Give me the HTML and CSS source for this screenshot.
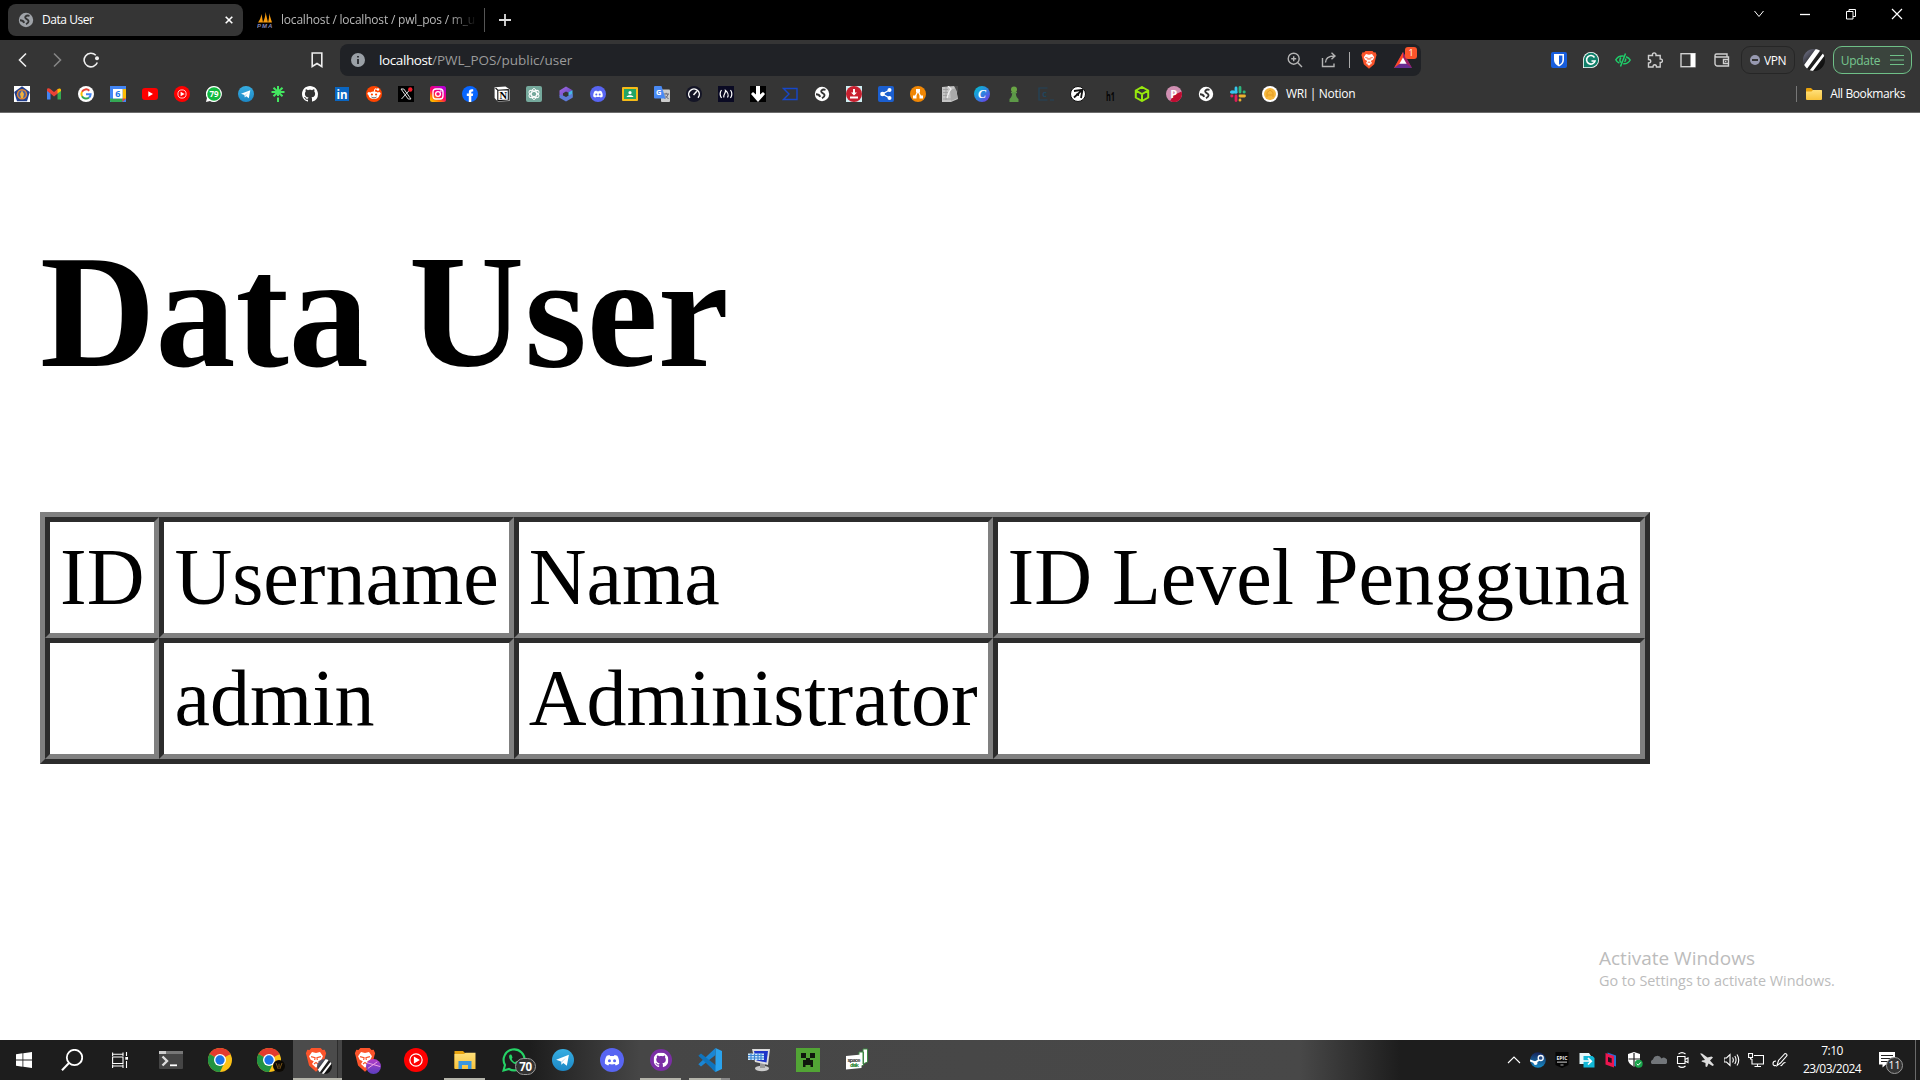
FILE: index.html
```html
<!DOCTYPE html>
<html lang="id">
<head>
<meta charset="utf-8">
<title>Data User</title>
<link rel="stylesheet" href="styles.css">
</head>
<body>
<svg class="defs" width="0" height="0" aria-hidden="true">
  <defs>
    <linearGradient id="g-tg" x1="0" y1="0" x2="0" y2="1"><stop offset="0" stop-color="#37aee2"/><stop offset="1" stop-color="#1c87c5"/></linearGradient>
    <linearGradient id="g-ig" x1="0" y1="1" x2=".7" y2="0"><stop offset="0" stop-color="#ffd500"/><stop offset=".3" stop-color="#ff7a00"/><stop offset=".55" stop-color="#ff0169"/><stop offset="1" stop-color="#b900d4"/></linearGradient>
    <linearGradient id="g-canva" x1="0" y1="0" x2="1" y2="1"><stop offset="0" stop-color="#00c4cc"/><stop offset=".5" stop-color="#2a87e0"/><stop offset="1" stop-color="#7d2ae8"/></linearGradient>
    <linearGradient id="g-cop" x1="0" y1="0" x2="1" y2="1"><stop offset="0" stop-color="#a36be0"/><stop offset="1" stop-color="#5c3fc4"/></linearGradient>
    <linearGradient id="g-folder" x1="0" y1="0" x2="0" y2="1"><stop offset="0" stop-color="#ffe07a"/><stop offset="1" stop-color="#f8c33b"/></linearGradient>
    <linearGradient id="g-ava" x1="0" y1="0" x2="1" y2="1"><stop offset="0" stop-color="#7d7f9a"/><stop offset=".5" stop-color="#222"/><stop offset="1" stop-color="#050505"/></linearGradient>
    <linearGradient id="g-steam" x1="0" y1="0" x2="0" y2="1"><stop offset="0" stop-color="#16235a"/><stop offset="1" stop-color="#1689c4"/></linearGradient>
    <linearGradient id="g-pur" x1="0" y1="0" x2="0" y2="1"><stop offset="0" stop-color="#b33cc8"/><stop offset="1" stop-color="#5a3fc0"/></linearGradient>
    <clipPath id="c-round"><circle cx="8" cy="8" r="8"/></clipPath>
  </defs>
  <symbol id="globe" viewBox="0 0 16 16"><circle cx="8" cy="8" r="7.200" fill="currentColor"/><path d="M11.500 3.800C8 2.800 5.800 5.500 8.300 6.800S12 9.800 8 12.300M2 8.300C4 8.300 5.500 9 6.200 10.800" fill="none" stroke="#353535" stroke-width="1.900"/></symbol>
  <symbol id="github" viewBox="0 0 16 16"><path fill="currentColor" d="M8 0C3.580 0 0 3.580 0 8c0 3.540 2.290 6.530 5.470 7.590.4.070.55-.17.55-.38 0-.19-.01-.82-.01-1.490-2.010.37-2.530-.49-2.690-.94-.09-.23-.48-.94-.82-1.130-.28-.15-.68-.52-.01-.53.63-.01 1.080.58 1.230.82.72 1.210 1.870.87 2.330.66.070-.52.28-.87.51-1.070-1.780-.2-3.640-.89-3.640-3.950 0-.87.31-1.590.82-2.150-.08-.2-.36-1.020.08-2.120 0 0 .67-.21 2.200.82.64-.18 1.320-.27 2-.27.68 0 1.360.09 2 .27 1.530-1.040 2.200-.82 2.200-.82.44 1.100.16 1.920.08 2.120.51.56.82 1.270.82 2.150 0 3.070-1.870 3.750-3.650 3.950.29.25.54.73.54 1.480 0 1.070-.01 1.930-.01 2.200 0 .21.15.46.55.38A8.010 8.010 0 0 0 16 8c0-4.420-3.580-8-8-8z"/></symbol>
  <symbol id="telegram" viewBox="0 0 16 16"><circle cx="8" cy="8" r="8" fill="url(#g-tg)"/><path d="M3 7.800 12.300 4.200 10.800 12.200 8.200 10.200 6.900 11.500 6.500 9.100z" fill="#fff"/><path d="M6.500 9.200 10.500 6 7.400 9.700 6.900 11.500z" fill="#b5d9ee"/></symbol>
  <symbol id="discord" viewBox="0 0 16 16"><circle cx="8" cy="8" r="8" fill="#5865f2"/><path d="M6.300 4.600 4.500 5.200C3.500 6.800 3.100 8.600 3.300 10.500c.8.600 1.500.9 2.200 1.100l.6-.9c1.200.3 2.600.3 3.800 0l.6.9c.8-.2 1.500-.6 2.200-1.100.2-2-.2-3.700-1.200-5.300l-1.800-.6-.4.700H6.700z" fill="#fff"/><circle cx="6.300" cy="8.500" r="1" fill="#5865f2"/><circle cx="9.700" cy="8.500" r="1" fill="#5865f2"/></symbol>
  <symbol id="ytmusic" viewBox="0 0 16 16"><circle cx="8" cy="8" r="8" fill="#f00"/><circle cx="8" cy="8" r="4.100" fill="none" stroke="#fff" stroke-width=".8"/><path d="M6.600 5.700 10.600 8 6.600 10.300z" fill="#fff"/></symbol>
  <symbol id="chrome" viewBox="0 0 16 16"><circle cx="8" cy="8" r="8" fill="#fbc116"/><path d="M8 8 1.070 4A8 8 0 0 1 14.930 4z" fill="#e33b2e"/><path d="M8 8 1.070 4A8 8 0 0 0 8 16L11 9.700z" fill="#229342"/><path d="M8 4h6.930l.2.400H8z" fill="#e33b2e"/><circle cx="8" cy="8" r="4" fill="#fff"/><circle cx="8" cy="8" r="3.100" fill="#1a73e8"/></symbol>
  <symbol id="brave" viewBox="0 0 16 18"><path d="M4.500 0h7l1.400 1.500L14.500 1.300 15.600 4 15 6 13.200 13.200 8 17.800 2.800 13.200 1 6 .4 4 1.500 1.300 3.100 1.500z" fill="#fb542b"/><path d="M5 3 8 3.700 11 3 13.200 6.200 12 8.800 9.700 10 11 12 8 14.800 5 12 6.300 10 4 8.800 2.800 6.200z" fill="#fff"/><path d="M4.300 6.500 7.300 7.300 7 9M11.700 6.500 8.700 7.300 9 9M6.500 12 8 10.800 9.500 12" fill="none" stroke="#fb542b" stroke-width=".9"/></symbol>
  <symbol id="avatar" viewBox="0 0 16 16"><g clip-path="url(#c-round)"><rect width="16" height="16" fill="url(#g-ava)"/><path d="M-1 14 10-1h4L1 17zM4.500 16 15 2.500l2 .5L6.500 17z" fill="#fff"/></g></symbol>
</svg>

<header class="browser">
  <div class="tabstrip">
    <div class="tab tab-active">
      <svg class="i16 tab-globe"><use href="#globe"/></svg>
      <span class="tab-title">Data User</span>
      <svg class="tab-close" viewBox="0 0 8 8"><path d="M.7.7 7.300 7.300M7.300.7.7 7.300"/></svg>
    </div>
    <div class="tab tab-idle">
      <svg class="i16" viewBox="0 0 16 16"><path d="M1 10.500C3 8 4 5 4.500 2L6 10.500zM6 10.500C7.500 7 8.500 4 8.500 0L11 10.500zM11 10.500C12 7 12.500 4 12 1L15 10.500z" fill="#f89c0e"/><text x="0" y="15.500" class="t-pma" textLength="15">PMA</text></svg>
      <span class="tab-title tab-fade">localhost / localhost / pwl_pos / m_u</span>
    </div>
    <span class="tab-sep"></span>
    <svg class="newtab" viewBox="0 0 12 12"><path d="M6 0V12M0 6H12"/></svg>
    <div class="winctl">
      <svg viewBox="0 0 12 12"><path d="M1.500 3 6 8.500 10.500 3"/></svg>
      <svg viewBox="0 0 12 12"><path d="M1 6.500H11" stroke-width="1.300"/></svg>
      <svg viewBox="0 0 12 12"><path d="M1.500 3.500h6.500v7.500H1.500zM4 3.500V1.500h6.500v7H8"/></svg>
      <svg viewBox="0 0 12 12"><path d="M1 1 11 11M11 1 1 11" stroke-width="1.200"/></svg>
    </div>
  </div>

  <div class="toolbar">
    <div class="nav">
      <svg viewBox="0 0 16 16"><path d="M11 1.500 4.500 8 11 14.500" class="ln"/></svg>
      <svg class="dim" viewBox="0 0 16 16"><path d="M5 1.500 11.500 8 5 14.500" class="ln"/></svg>
      <svg viewBox="0 0 16 16"><path d="M12.800 3.300A6.800 6.800 0 1 0 14.300 10.500" class="ln"/><circle cx="14" cy="6.200" r="2" fill="#eee"/></svg>
    </div>
    <svg class="bookmark" viewBox="0 0 12 16"><path d="M1.200 1h9.600v13.500L6 11.500 1.200 14.500z" class="ln"/></svg>
    <div class="omnibox">
      <svg class="info" viewBox="0 0 14 14"><circle cx="7" cy="7" r="7" fill="#9aa0a6"/><path d="M7 3V4.600M7 6V11" stroke="#202226" stroke-width="1.700"/></svg>
      <span class="url"><b>localhost</b>/PWL_POS/public/user</span>
      <div class="omni-icons">
        <svg class="i16" viewBox="0 0 16 16"><g class="ol"><circle cx="6.700" cy="6.700" r="5.500"/><path d="M10.800 10.800 15 15M6.700 4.200V9.200M4.200 6.700H9.200"/></g></svg>
        <svg class="i16" viewBox="0 0 16 16"><path class="ol" d="M1.500 6V14.500H13V11.500M4.500 10.500C4.500 6.500 7 4 13.500 4M10.500.8 14 4 10.500 7.300"/></svg>
        <span class="omni-sep"></span>
        <svg class="brave-i"><use href="#brave"/></svg>
        <div class="bat">
          <svg viewBox="0 0 18 16"><path d="M9 0 18 16H0z" fill="#662d91"/><path d="M9 0 0 16 6 11.500 9 6z" fill="#ff4724"/><path d="M9 0 18 16 12 11.500 9 6z" fill="#9e1f63"/><path d="M9 5.500 12.600 11.700H5.400z" fill="#fff"/></svg>
          <span class="bat-badge">1</span>
        </div>
      </div>
    </div>
    <div class="ext">
      <svg class="i16" viewBox="0 0 16 16"><rect width="16" height="16" rx="2" fill="#175ddc"/><path d="M3 2H13V8C13 11 11 13 8 14.500 5 13 3 11 3 8z" fill="#fff"/><path d="M8 3.500H11.400V8C11.400 10.300 10 11.800 8 12.800z" fill="#175ddc"/></svg>
      <svg class="i16" viewBox="0 0 16 16"><path d="M8 0A8 8 0 1 1 8 16H0V8A8 8 0 0 1 8 0z" fill="#fff"/><path d="M8 .8A7.200 7.200 0 1 1 8 15.200H.8V8A7.200 7.200 0 0 1 8 .8z" fill="#11806a"/><path d="M11.500 5.500A4.300 4.300 0 1 0 12 9H8.500" fill="none" stroke="#fff" stroke-width="1.600"/></svg>
      <svg class="i16" viewBox="0 0 16 16"><g fill="none" stroke="#1fcf6a" stroke-width="1.500"><path d="M10.500 1.500 5.500 14.500M8.500 4C4 3.500 1.800 6 .8 7.800c.7 1.500 2 2.600 3.600 3.400M11 4.700c2 .7 3.500 2 4.200 3.300-1.200 2.300-3.700 4-7 3.700M6 5.500C4 8 5 9.500 6 10.500M10.500 6.500C11 8 10.500 9 9.500 9.800"/></g></svg>
      <svg class="i16" viewBox="0 0 16 16"><path class="ol lt" d="M1.500 3.500H5.500C4.800 0 9.500 0 9 3.500H13.200V7C16.200 6.500 16.200 11 13.200 10.500V15H9.500C9.500 12 6 12 6 15H1.500V11C4.500 11 4.500 7.500 1.500 7.500z"/></svg>
      <svg class="i16" viewBox="0 0 16 16"><rect x="1" y="1.700" width="14" height="13" class="ol lt"/><path d="M10.500 1.500H15V15H10.500z" fill="#fff"/></svg>
      <svg class="i16" viewBox="0 0 16 16"><path class="ol lt" d="M13 4.500V2H2.500A1.500 1.500 0 0 0 2.500 5H14.500V14H3.500A2.500 2.500 0 0 1 1 11.500V3.500M14.500 7.500H9.500V11.500H14.500"/><circle cx="11.700" cy="9.500" r=".8" fill="#ccc"/></svg>
    </div>
    <div class="vpn"><i></i>VPN</div>
    <svg class="ava"><use href="#avatar"/></svg>
    <div class="update">Update<svg viewBox="0 0 14 12"><path d="M0 1.500H14M0 6H14M0 10.500H14"/></svg></div>
  </div>

  <div class="bookmarks">
    <svg viewBox="0 0 16 16"><rect width="16" height="16" fill="#fff"/><path d="M8 .2 15.800 6 13 15.300H3L.2 6z" fill="#23408e"/><circle cx="8" cy="8.300" r="5.200" fill="#e2862f"/><circle cx="8" cy="8.300" r="3.800" fill="#4b5fa0"/><path d="M8 4.500 10 8 9 12H7L6 8z" fill="#f0b23c"/></svg>
    <svg viewBox="0 0 16 16"><path d="M1 4V13.500H4.500V7z" fill="#4285f4"/><path d="M15 4V13.500H11.500V7z" fill="#34a853"/><path d="M1 3.500C1 2 3 2 4 2.800L8 6 12 2.800V7.300L8 10.400 4.500 7.600 1 5z" fill="#ea4335"/><path d="M11.500 3.200C13 2 15 2.200 15 4V5L11.500 7.600z" fill="#fbbc04"/></svg>
    <svg viewBox="0 0 16 16"><circle cx="8" cy="8" r="8" fill="#fff"/><g fill="none" stroke-width="2"><path d="M11.300 4.700A4.600 4.600 0 0 0 4 5.800" stroke="#ea4335"/><path d="M4 5.700A4.700 4.700 0 0 0 4 10.300" stroke="#fbbc05"/><path d="M4 10.200A4.600 4.600 0 0 0 11 11.500" stroke="#34a853"/><path d="M8 8.200H12.600C12.600 9.500 12 10.800 11 11.500" stroke="#4285f4"/></g></svg>
    <svg viewBox="0 0 16 16"><rect width="16" height="16" fill="#4285f4"/><path d="M12.500 3H16V13H12.500z" fill="#fbbc04"/><path d="M0 12.500H12.500V16H1.500Q0 16 0 14.500z" fill="#34a853"/><path d="M12.500 12.500H16L12.500 16z" fill="#ea4335"/><rect x="3" y="3" width="9.500" height="9.500" fill="#fff"/><text x="7.800" y="11" class="t b mid" font-size="9" fill="#1a73e8">6</text></svg>
    <svg viewBox="0 0 16 16"><rect y="2" width="16" height="12" rx="3" fill="#f00"/><path d="M6.300 5.300 11 8 6.300 10.700z" fill="#fff"/></svg>
    <svg><use href="#ytmusic"/></svg>
    <svg viewBox="0 0 16 16"><path d="M8 0A8 8 0 1 1 4 15L0 16 1 12A8 8 0 0 1 8 0z" fill="#fff"/><circle cx="8" cy="8" r="6.800" fill="#12b93f"/><text x="8" y="11" class="t b mid" font-size="8" fill="#fff">79</text></svg>
    <svg><use href="#telegram"/></svg>
    <svg viewBox="0 0 16 16"><path d="M8 0V10M8 11.500V16M1.500 6H14.500M3.500 1.700 12.500 10.300M12.500 1.700 3.500 10.300" stroke="#43e660" stroke-width="2"/></svg>
    <svg class="white"><use href="#github"/></svg>
    <svg viewBox="0 0 16 16"><rect x="1" y="1" width="14" height="14" fill="#0a66c2"/><text x="8" y="12.800" class="t b mid" font-size="11.500" fill="#fff">in</text></svg>
    <svg viewBox="0 0 16 16"><circle cx="8" cy="8" r="8" fill="#ff4500"/><path d="M8 6.500 9 2.800 12 3.500" fill="none" stroke="#fff"/><circle cx="12" cy="3.500" r="1.200" fill="#fff"/><circle cx="3" cy="7.500" r="1.500" fill="#fff"/><circle cx="13" cy="7.500" r="1.500" fill="#fff"/><ellipse cx="8" cy="9.200" rx="5.300" ry="3.800" fill="#fff"/><circle cx="5.900" cy="8.500" r="1.100" fill="#ff4500"/><circle cx="10.100" cy="8.500" r="1.100" fill="#ff4500"/><path d="M5.500 11C7 12.200 9 12.200 10.500 11" fill="none" stroke="#333" stroke-width=".8"/></svg>
    <svg viewBox="0 0 16 16"><rect width="16" height="16" fill="#000"/><path d="M3 3H5.800L13 13H10.200zM12.500 3 3.500 13" fill="none" stroke="#ddd"/><circle cx="12.300" cy="3.500" r="2.200" fill="#f4212e"/></svg>
    <svg viewBox="0 0 16 16"><rect width="16" height="16" rx="2.500" fill="url(#g-ig)"/><rect x="3" y="3" width="10" height="10" rx="3" fill="none" stroke="#fff" stroke-width="1.300"/><circle cx="8" cy="8" r="2.400" fill="none" stroke="#fff" stroke-width="1.300"/><circle cx="10.900" cy="5.100" r=".8" fill="#fff"/></svg>
    <svg viewBox="0 0 16 16"><circle cx="8" cy="8" r="8" fill="#0866ff"/><path d="M6.800 16V10H4.800V7.500H6.800V6.500C6.800 3.800 8.200 2.900 11.200 3.300V5.500C9.600 5.400 9.300 5.800 9.300 6.800V7.500H11.200L10.800 10H9.300V16z" fill="#fff"/></svg>
    <svg viewBox="0 0 16 16"><path d="M.6 1.200 11.500.5 15.500 3.200V15L3.800 15.600.6 12z" fill="#fff"/><path d="M3.800 4.200 14.300 3.600V14L3.800 14.600zM3.800 4.200 1.500 2" stroke="#111" stroke-width="1.100" fill="none"/><text x="9.200" y="12.800" class="serif b mid" font-size="10.500" fill="#000">N</text></svg>
    <svg viewBox="0 0 16 16"><rect width="16" height="16" rx="2" fill="#75a99c"/><g fill="none" stroke="#fff" stroke-width=".9"><ellipse cx="8" cy="8" rx="2.600" ry="5.500"/><ellipse cx="8" cy="8" rx="2.600" ry="5.500" transform="rotate(60 8 8)"/><ellipse cx="8" cy="8" rx="2.600" ry="5.500" transform="rotate(120 8 8)"/></g></svg>
    <svg viewBox="0 0 16 16"><path d="M8 .5 14.500 4.200 10 6.500 8 5.500 5 7.200V12L1.500 9.500V4.500z" fill="url(#g-cop)"/><path d="M14.500 4.200V11.500L10.500 9.500V6z" fill="#49b7e8"/><path d="M5 9.500 8 11 14.500 7.500V11.700L8 15.500 1.500 11.700V9z" fill="#5e7bd8"/></svg>
    <svg><use href="#discord"/></svg>
    <svg viewBox="0 0 16 16"><rect y="1" width="16" height="14" rx="1" fill="#f6bb18"/><rect x="2" y="3" width="12" height="10" fill="#23a566"/><circle cx="8" cy="6.700" r="1.600" fill="#fff"/><path d="M4.500 11C5 8.700 11 8.700 11.500 11z" fill="#fff"/></svg>
    <svg viewBox="0 0 16 16"><rect x="7" y="3.500" width="9" height="12.500" rx="1" fill="#ccc"/><path d="M9.500 8H15M12.200 6.800V8M14 8C13.500 11 11.500 12 10.500 12.500M11 9.500 14.500 13" stroke="#667" fill="none"/><path d="M0 1Q0 0 1 0H7.500L11.500 12.500H1Q0 12.500 0 11.500z" fill="#4a8af4"/><text x="4.800" y="9" class="t b mid" font-size="7.500" fill="#fff">G</text></svg>
    <svg viewBox="0 0 16 16"><circle cx="8" cy="8" r="8" fill="#141526"/><path d="M4 11.800A5.300 5.300 0 1 1 12 11.800M7.500 9 10.800 5.300" fill="none" stroke="#fff" stroke-width="1.500"/></svg>
    <svg viewBox="0 0 16 16"><rect width="16" height="16" fill="#0a0a23"/><path d="M3.500 4Q.8 8 3.500 12M12.500 4Q15.200 8 12.500 12M6 11.500C4.500 9 8 7.500 7.500 4.500 9.500 6 11 9 9.500 11.500" fill="none" stroke="#fff" stroke-width="1.200"/></svg>
    <svg viewBox="0 0 16 16"><rect width="16" height="16" fill="#000"/><path d="M6 0H10V8.500L13 6 15 8 8 16 1 8 3 6 6 8.500z" fill="#fff"/></svg>
    <svg viewBox="0 0 16 16"><path d="M1.500 2.500H15V13.500H1.500L7 8z" fill="none" stroke="#1747c9" stroke-width="1.400"/></svg>
    <svg class="white"><use href="#globe"/></svg>
    <svg viewBox="0 0 16 16"><rect width="16" height="16" fill="#cfeef2"/><circle cx="8" cy="8" r="8" fill="#c8202f"/><path d="M7 3H9V6.500H11L8 9.500 5 6.500H7zM4 10.500H12V12.500H4z" fill="#fff"/></svg>
    <svg viewBox="0 0 16 16"><rect width="16" height="16" rx="2" fill="#1b5fd0"/><path d="M11.500 4 4.500 8 11.500 12" fill="none" stroke="#fff" stroke-width="1.300"/><circle cx="11.500" cy="4" r="2" fill="#fff"/><circle cx="4.500" cy="8" r="2.300" fill="#fff"/><circle cx="11.500" cy="12" r="2" fill="#fff"/></svg>
    <svg viewBox="0 0 16 16"><circle cx="8" cy="8" r="8" fill="#f08705"/><path d="M8 5 5 11M8 5 11 11" stroke="#fff" stroke-width="1.300"/><path d="M6 3H10V6.500H6zM3 9.500H6.500V12.500H3zM9.500 9.500H13V12.500H9.500z" fill="#fff"/></svg>
    <svg viewBox="0 0 16 16"><path d="M0 1 6 .5 13 0 14 2 16 13 9 16H0z" fill="#c4c4c4"/><path d="M1 3.500H6M1 6.500H6M1 9.500H7M1 13H9M4 1V14" stroke="#999" stroke-width=".8"/><path d="M8 4 14 2 15.500 12 9 15z" fill="#a9a9a9"/><path d="M12 0H16V7z" fill="#4a4a4a"/><path d="M6 0 9 3 7 6 5 12" stroke="#eee" stroke-width="1.300" fill="none"/></svg>
    <svg viewBox="0 0 16 16"><circle cx="8" cy="8" r="8" fill="url(#g-canva)"/><text x="8" y="12" class="serif b mid" font-style="italic" font-size="12" fill="#fff">C</text></svg>
    <svg viewBox="0 0 16 16"><circle cx="8" cy="3.500" r="3" fill="#69a545"/><path d="M5 6H11V7.200H9.800C10 10 11 12 12.500 13V16H3.500V13C5 12 6 10 6.200 7.200H5z" fill="#5d9948"/></svg>
    <svg viewBox="0 0 16 16"><path d="M9.500 2H1V14H9.500M12 14H16" fill="none" stroke="#22455c" stroke-width="1.200"/><text x="6.500" y="11" class="t b mid" font-size="9" fill="#22455c">c</text></svg>
    <svg viewBox="0 0 16 16"><circle cx="8" cy="8" r="7.500" fill="#fff" stroke="#111"/><path d="M4 5 12.500 3.800 11 12M12 4.200 4 11.500M6 8.500 9 9" fill="none" stroke="#111" stroke-width="1.800"/></svg>
    <svg viewBox="0 0 16 16"><text x="4" y="14.500" class="t b" font-size="12.500" textLength="9" fill="#050505" lengthAdjust="spacingAndGlyphs">h1</text></svg>
    <svg viewBox="0 0 16 16"><path d="M8 1 14.200 4.500V11.500L8 15 1.800 11.500V4.500zM1.800 4.500 8 8 14.200 4.500M8 8V15" fill="none" stroke="#97e80d" stroke-width="2"/></svg>
    <svg viewBox="0 0 16 16"><circle cx="8" cy="8" r="8" fill="#d08fb2"/><path d="M15.500 5.500A8 8 0 0 1 4 15L8 9z" fill="#c00d32"/><text x="7.800" y="12" class="t b mid" font-size="11" fill="#fff">P</text></svg>
    <svg class="white"><use href="#globe"/></svg>
    <svg viewBox="0 0 16 16"><g stroke-width="2.800" stroke-linecap="round"><path d="M6 2V6M2 6H3" stroke="#36c5f0"/><path d="M1.500 6.200H6" stroke="#36c5f0"/><path d="M10 1.500V6M14.300 6H14" stroke="#2eb67d"/><path d="M10 10H14.500M10 14V14.200" stroke="#ecb22e"/><path d="M6 10V14.500M1.700 10H2" stroke="#e01e5a"/></g></svg>
    <svg viewBox="0 0 16 16"><circle cx="8" cy="8" r="8" fill="#fff"/><circle cx="8" cy="8" r="6" fill="#f6b73c"/><path d="M5 11V6.500L8 4 11 6.500V11M5.500 9H10.500" fill="none" stroke="#e39a20"/></svg>
    <span class="bm-label">WRI | Notion</span>
    <div class="allbm">
      <svg viewBox="0 0 16 16"><path d="M0 3Q0 2 1 2H5L7 4H15Q16 4 16 5V7H0z" fill="#e8a20c"/><path d="M0 5.500H5.500L7 4H15Q16 4 16 5V13Q16 14 15 14H1Q0 14 0 13z" fill="url(#g-folder)"/></svg>
      <span>All Bookmarks</span>
    </div>
  </div>
</header>

<main class="page">
  <h1>Data User</h1>
  <table class="users">
    <tr><td>ID</td><td>Username</td><td>Nama</td><td>ID Level Pengguna</td></tr>
    <tr><td></td><td>admin</td><td>Administrator</td><td></td></tr>
  </table>
  <div class="watermark"><p class="wm-big">Activate Windows</p><p class="wm-small">Go to Settings to activate Windows.</p></div>
</main>

<footer class="taskbar">
  <div class="sys">
    <svg class="i16" viewBox="0 0 16 16"><path d="M0 2.200 6.500 1.300V7.600H0zM7.300 1.200 16 0V7.600H7.300zM0 8.400H6.500V14.700L0 13.800zM7.300 8.400H16V16L7.300 14.800z" fill="#fff"/></svg>
    <svg class="i22" viewBox="0 0 22 22"><circle cx="13.500" cy="8.500" r="7.700" fill="none" stroke="#fff" stroke-width="1.800"/><path d="M8 14 1 21.300" stroke="#fff" stroke-width="2"/></svg>
    <svg class="i16" viewBox="0 0 16 16"><path d="M.6 4V.6M.6 2.300H11M11 4V.6M.6 12.500V16M.6 14H11M11 12.500V16M.6 5H11V11.500H.6zM14.500 0V4M14.500 9V16" fill="none" stroke="#fff" stroke-width="1.100"/><rect x="13.300" y="5" width="2.700" height="2.700" fill="#fff"/></svg>
  </div>
  <div class="apps">
    <div class="app"><svg class="i24" viewBox="0 0 24 24"><rect y="3" width="24" height="18" rx="1" fill="#454545"/><rect y="3" width="24" height="3" fill="#777"/><rect y="3" width="7" height="3" fill="#ccc"/><path d="M3.500 8.500 8 13 3.500 17.500" fill="none" stroke="#ddd" stroke-width="2.400"/><path d="M11 17.300H18" stroke="#fff" stroke-width="1.800"/></svg></div>
    <div class="app"><svg class="i24"><use href="#chrome"/></svg></div>
    <div class="app"><svg class="i24"><use href="#chrome"/></svg><svg class="mini" viewBox="0 0 16 16"><circle cx="8" cy="8" r="8" fill="#0c0904"/><path d="M4 4 7 12M12 4 9 12M8 5V10" stroke="#7a5518" stroke-width="1.300"/></svg></div>
    <div class="app active"><svg class="i-brave"><use href="#brave"/></svg><svg class="mini big"><use href="#avatar"/></svg></div>
    <div class="app"><svg class="i-brave"><use href="#brave"/></svg><svg class="mini big" viewBox="0 0 16 16"><circle cx="8" cy="8" r="8" fill="url(#g-pur)"/><path d="M1 4 15 8M2 10 12 3" stroke="#f2a6e4"/></svg></div>
    <div class="app"><svg class="i24"><use href="#ytmusic"/></svg></div>
    <div class="app open"><svg class="i24" viewBox="0 0 24 24"><path d="M1.500 3H10L12 5H22V20H1.500z" fill="#e9a40f"/><path d="M1.500 6H11L12.500 4.700H22.500V21H1.500z" fill="url(#g-folder)"/><path d="M5.500 13H18.500V21H15V17H9V21H5.500z" fill="#3a96e0"/></svg></div>
    <div class="app"><svg class="i24" viewBox="0 0 24 24"><path d="M1.500 22.500 3 17A10.500 10.500 0 1 1 7 21z" fill="none" stroke="#25d366" stroke-width="2.100"/><path d="M8 6.500C6 8 7.500 12 10.500 14.500 13.500 17 16.500 17.500 17.500 15L14.500 13 13 14.300C11.500 13.700 10.300 12.500 9.700 11L10.500 9.500 9.500 6.800z" fill="#25d366"/></svg><span class="count">70</span></div>
    <div class="app"><svg class="i22"><use href="#telegram"/></svg></div>
    <div class="app"><svg class="i24"><use href="#discord"/></svg></div>
    <div class="app open"><svg class="i22" viewBox="0 0 22 22"><circle cx="11" cy="11" r="11" fill="#7b2fa5"/><svg x="3.500" y="3.500" width="15" height="15" class="white"><use href="#github"/></svg></svg></div>
    <div class="app open double"><svg class="i24" viewBox="0 0 24 24"><path d="M17.500 0 24 3V21L17.500 24 14 20.500 17.500 17z" fill="#2aa2ec"/><path d="M17.500 0V7L3 18.500.3 16.200z" fill="#1a86d4"/><path d="M.3 7.800 3 5.500 17.500 17V24z" fill="#0f74bd"/></svg></div>
    <div class="app"><svg class="i24" viewBox="0 0 24 24"><ellipse cx="15" cy="20.500" rx="7" ry="2.700" fill="#ccc"/><path d="M13 15H18V20H13z" fill="#999"/><path d="M5 1H23L21 17 8 14z" fill="#ddd"/><path d="M7 3H21L19.500 14.500 9.500 12.500z" fill="#1d35c8"/><path d="M1 5.500H17V12H1z" fill="#cfe8fa"/><path d="M1 7.500H17M1 10H17M4 5.500V12M7.500 5.500V12M11 5.500V12M14 5.500V12" stroke="#3b86d4" stroke-width="1.200"/></svg></div>
    <div class="app"><svg class="i24" viewBox="0 0 24 24"><rect width="24" height="24" fill="#52a535"/><path d="M5 5H10V10H14V5H19V10H14V12H17V19H14.500V17H9.500V19H7V12H10V10H5z" fill="#10180d"/></svg></div>
    <div class="app"><svg class="i24" viewBox="0 0 24 24"><path d="M18 1H22.500V14L18 16zM14 4H18.500V17L14 19z" fill="#fff" stroke="#3f8a45"/><path d="M1 8 16.500 6.500V20L1 21.500z" fill="#fff"/><text x="2.500" y="13.500" class="t b" font-size="6" textLength="13" fill="#444">space</text><text x="5" y="19" class="t b" font-size="6" textLength="9" fill="#2f8a3a">desk</text></svg></div>
  </div>
  <div class="tray">
    <svg viewBox="0 0 16 16"><path d="M2 11 8 5 14 11" class="tl"/></svg>
    <svg viewBox="0 0 16 16"><circle cx="8" cy="8" r="7.800" fill="url(#g-steam)"/><path d="M0 8.500 5 10.500 9 8" stroke="#fff" stroke-width="2" fill="none"/><circle cx="5.500" cy="11" r="2" fill="#fff"/><circle cx="10.700" cy="6" r="2.500" fill="#244b86" stroke="#fff" stroke-width="1.300"/></svg>
    <svg viewBox="0 0 16 16"><path d="M1.500 0H14.500V13L8 16 1.500 13z" fill="#050505"/><text x="2.500" y="7.800" class="t b" font-size="6" textLength="11" lengthAdjust="spacingAndGlyphs" fill="#eee">EPIC</text><path d="M3 10.200H13M6.500 13H9.500" stroke="#aaa" stroke-width="1.200"/></svg>
    <svg viewBox="0 0 16 16"><path d="M.5 1H10L12 4V12H.5z" fill="#e8f7fa"/><path d="M4.500 4H13.500L15.500 6V15.500H4.500z" fill="#12b8d7"/><path d="M4 9H12M9 6 12.300 9.300 9 12.500" fill="none" stroke="#fff" stroke-width="1.700"/></svg>
    <svg viewBox="0 0 16 16"><path d="M4.500.5 13 3.500V14.500L4.500 12z" fill="#2a6fd0"/><path d="M2.500 1 11 4V15.500L2.500 12.500z" fill="#ee164f"/><path d="M5 5 8.700 6.300V11L5 9.800z" fill="#241020"/></svg>
    <svg viewBox="0 0 16 16"><path d="M7 0 13 2V7C13 11 10 13 7 14.500 4 13 1 11 1 7V2z" fill="#fff"/><path d="M7 1V14M1.500 7H13" stroke="#222" stroke-width="1.200"/><circle cx="11.700" cy="11.700" r="4" fill="#18a34a"/><path d="M9.700 11.800 11.200 13.200 13.800 10.400" fill="none" stroke="#fff"/></svg>
    <svg viewBox="0 0 16 16"><path d="M1 12A2.500 2.500 0 0 1 2 7.500 4.500 4.500 0 0 1 10.500 6.500 2.800 2.800 0 0 1 15 12z" fill="#72767a"/></svg>
    <svg viewBox="0 0 16 16"><path class="tl" d="M2.500 4.500H10V11.500H2.500zM10 7.500 13 6V10.500L10 9M3.500 2Q7-.8 10.500 2M3.500 14Q7 16.800 10.500 14"/></svg>
    <svg viewBox="0 0 16 16"><path d="M1 1.500 3 1.500 8.500 5.500 12.500 4.500 14 5.500 11 8.500 15 13 13.500 14 9.500 11.500 8 15 6.500 14.500 6.500 11 2.500 9.500 3 8.500 6 8z" fill="#ddd"/></svg>
    <svg viewBox="0 0 16 16"><path class="tl" d="M0 6H2.500L6 2.500V13.500L2.500 10H0zM8.500 5.500Q10.200 8 8.500 10.500M10.800 4Q13.300 8 10.800 12M13 2.500Q16.500 8 13 13.500"/></svg>
    <svg viewBox="0 0 16 16"><path class="tl" d="M6 3.500H15.500V12H4V7M9.500 12V14.500M6.500 14.500H13M.6 1.500H4.500V5.500H.6zM2.500 5.500V7H4"/></svg>
    <svg viewBox="0 0 16 16"><path class="tl" d="M5 13.500 6.500 8.500 13 1.500Q15 1.500 15 3.500L8.500 11zM4 9C0 9 0 14.500 4 13.500M8.500 13.500C11 14.500 10 10 13.500 10.500"/></svg>
  </div>
  <div class="clock"><span>7:10</span><span>23/03/2024</span></div>
  <div class="notif"><svg viewBox="0 0 16 16"><path d="M0 0H16V12.500H7L3.500 15.500V12.500H0z" fill="#fff"/><path d="M2 3.500H14M2 6.500H14M2 9.500H9" stroke="#222" stroke-width="1.200"/></svg><span>11</span></div>
  <span class="peek"></span>
</footer>
</body>
</html>
```
FILE: styles.css
```css
* { box-sizing: border-box; }
body {
  margin: 0;
  width: 1920px;
  height: 1080px;
  overflow: hidden;
  display: flex;
  flex-direction: column;
  background: #fff;
  font-family: "Open Sans", "Noto Sans", sans-serif;
}
svg { display: block; flex: none; }
.defs { position: absolute; }
.i16 { width: 16px; height: 16px; }
.i22 { width: 22px; height: 22px; }
.i24 { width: 24px; height: 24px; }
.white { color: #fff; }
.t { font-family: "Open Sans", sans-serif; }
.serif { font-family: "Liberation Serif", serif; }
.b { font-weight: 700; }
.mid { text-anchor: middle; }
.t-pma { font: italic 700 6px "Liberation Sans", sans-serif; fill: #8186b8; }

/* Browser chrome */
.browser { flex: none; height: 113px; background: #353535; border-bottom: 1px solid #6c6c6c; color: #fff; }
.tabstrip { height: 40px; background: #000; display: flex; align-items: center; padding-left: 8px; }
.tab { display: flex; align-items: center; height: 32px; font-size: 12px; letter-spacing: -.45px; }
.tab-active { width: 235px; background: #353535; border-radius: 8px; padding: 0 10px; }
.tab-globe { color: #9fa3a8; margin-right: 8px; }
.tab-title { white-space: nowrap; padding-bottom: 1px; }
.tab-close { width: 8px; height: 8px; margin-left: auto; stroke: #fff; stroke-width: 1.6; }
.tab-idle { width: 241px; padding-left: 14px; gap: 8px; }
.tab-fade {
  width: 196px;
  overflow: hidden;
  letter-spacing: -.2px;
  color: #b8b8b8;
  -webkit-mask-image: linear-gradient(90deg, #000 86%, transparent 100%);
  mask-image: linear-gradient(90deg, #000 86%, transparent 100%);
}
.tab-sep { width: 1px; height: 24px; background: #555; }
.newtab { width: 12px; height: 12px; margin-left: 14px; stroke: #ddd; stroke-width: 1.8; }
.winctl { display: flex; gap: 34px; margin: 0 17px 12px auto; }
.winctl svg { width: 12px; height: 12px; stroke: #fff; fill: none; }

.toolbar { height: 40px; display: flex; align-items: center; }
.nav { display: flex; gap: 18px; margin-left: 15px; }
.nav svg { width: 16px; height: 16px; }
.ln { fill: none; stroke: #eee; stroke-width: 1.6; }
.dim .ln { stroke: #858585; }
.bookmark { width: 12px; height: 16px; margin-left: 212px; }
.omnibox { width: 1081px; height: 32px; margin-left: 17px; padding: 0 9px 0 11px; border-radius: 8px; background: #202226; display: flex; align-items: center; }
.info { width: 14px; height: 14px; }
.url { margin-left: 14px; font-size: 13.5px; letter-spacing: 0; color: #9b9b9b; }
.url b { font-weight: 400; color: #fff; letter-spacing: -.4px; }
.omni-icons { display: flex; align-items: center; margin-left: auto; }
.omni-icons .i16 + .i16 { margin-left: 18px; }
.ol { fill: none; stroke: #b4b4b4; stroke-width: 1.4; }
.lt { stroke: #d0d0d0; }
.omni-sep { width: 1px; height: 16px; background: #aaa; margin: 0 11px 0 12px; }
.brave-i { width: 16px; height: 18px; }
.bat { position: relative; margin-left: 17px; }
.bat svg { width: 18px; height: 16px; }
.bat-badge { position: absolute; left: 11px; top: -5px; width: 12px; height: 12px; border-radius: 3px; background: #fb542b; font-size: 9px; line-height: 12px; text-align: center; }
.ext { display: flex; gap: 16px; margin-left: 130px; }
.ext svg:nth-child(5) { margin-left: 1px; }
.ext svg:nth-child(6) { margin-left: 2px; }
.vpn { width: 54px; height: 28px; margin-left: 11px; border: 1px solid #262626; border-radius: 9px; display: flex; align-items: center; justify-content: center; gap: 4px; font-size: 12px; letter-spacing: -.5px; }
.vpn i { width: 10px; height: 10px; border-radius: 50%; background: linear-gradient(90deg, transparent 2px, #353535 2px 8px, transparent 8px) 0 4px / 10px 2px no-repeat #9799b0; }
.ava { width: 22px; height: 22px; margin-left: 8px; }
.update { width: 79px; height: 28px; margin-left: 8px; border: 1px solid #6fc088; border-radius: 9px; background: #3a443d; color: #77c68f; display: flex; align-items: center; justify-content: center; gap: 10px; font-size: 12px; letter-spacing: -.3px; }
.update svg { width: 14px; height: 12px; stroke: #6fc088; stroke-width: 1.2; }

.bookmarks { height: 28px; padding: 0 15px 0 14px; display: flex; align-items: center; gap: 16px; font-size: 12px; }
.bookmarks svg { width: 16px; height: 16px; }
.bookmarks span { padding-bottom: 1px; }
.bm-label { margin-left: -8px; white-space: nowrap; letter-spacing: -.3px; }
.allbm { margin-left: auto; height: 16px; padding-left: 9px; border-left: 1px solid #777; display: flex; align-items: center; gap: 8px; white-space: nowrap; letter-spacing: -.4px; }

/* Page shown at 500% zoom */
.page { flex: 1; position: relative; display: flow-root; padding: 0 40px; font: 80px "Liberation Serif", serif; color: #000; }
.page h1 { margin: 107.2px 0; font-size: 160px; font-weight: 700; }
.users { border: 5px outset gray; border-spacing: 0; border-collapse: separate; }
.users td { border: 5px inset gray; padding: 5px 10px; height: 121px; }
.watermark { position: absolute; left: 1599px; top: 832px; font-family: "Open Sans", sans-serif; color: #bcbcbc; white-space: nowrap; }
.watermark p { margin: 0; }
.wm-big { font-size: 19px; line-height: 26px; }
.wm-small { font-size: 14.4px; line-height: 19px; }

/* Taskbar */
.taskbar { flex: none; height: 40px; display: flex; align-items: center; color: #fff; background: linear-gradient(90deg, #1d1d1d 530px, #464646 640px, #484848 1300px, #1d1d1d 1400px); }
.sys { width: 146px; padding-left: 16px; display: flex; align-items: center; gap: 29px; }
.sys .i16:last-child { margin-left: 0; }
.apps { display: flex; height: 40px; }
.app { position: relative; width: 49px; height: 40px; display: flex; align-items: center; justify-content: center; }
.i-brave { width: 22px; height: 24px; margin-right: 3px; }
.mini { position: absolute; left: 29px; top: 20px; width: 12px; height: 12px; }
.mini.big { left: 24px; top: 19px; width: 15px; height: 15px; }
.open::after, .active::after { content: ""; position: absolute; left: 4px; right: 4px; bottom: 0; height: 2px; background: #b4b4aa; }
.active { background: linear-gradient(90deg, #4b4b4b 44px, #2c2c2c 44px, #2c2c2c 45px, #444 45px); }
.active::after { left: 0; right: 0; }
.double::after { background: linear-gradient(90deg, #b4b4aa 32px, #888 32px); }
.count { position: absolute; left: 26px; top: 18px; width: 21px; height: 17px; border: 1px solid #999; border-radius: 9px; background: #333; font-size: 11.5px; font-weight: 700; line-height: 15px; text-align: center; letter-spacing: -.3px; }
.tray { display: flex; gap: 8.2px; margin-left: auto; }
.tray svg { width: 16px; height: 16px; }
.tl { fill: none; stroke: #fff; stroke-width: 1.1; }
.clock { width: 72px; margin-left: 8px; display: flex; flex-direction: column; align-items: center; font-size: 12px; line-height: 18px; letter-spacing: -.55px; }
.notif { position: relative; margin-left: 11px; width: 36px; }
.notif svg { width: 16px; height: 16px; }
.notif span { position: absolute; left: 7px; top: 5px; width: 17px; height: 17px; border: 1px solid #999; border-radius: 50%; background: #333; font-size: 10.5px; line-height: 15px; text-align: center; }
.peek { width: 1px; height: 40px; margin-right: 4px; background: #6a6a6a; }
```
